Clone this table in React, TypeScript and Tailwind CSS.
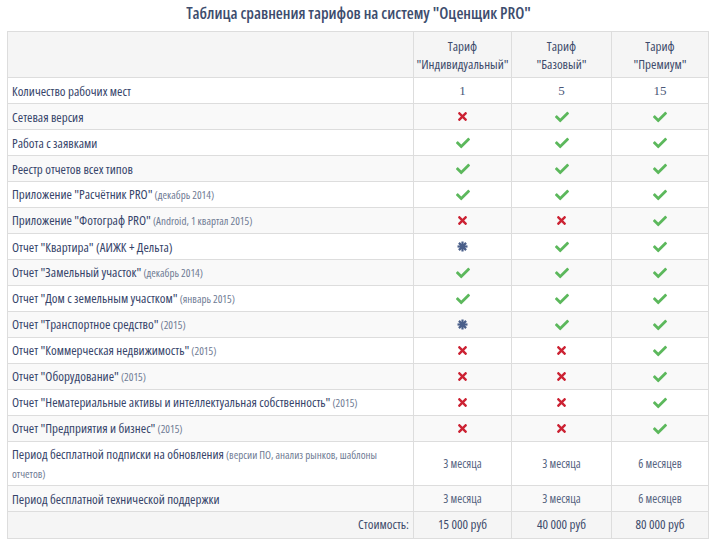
import React from "react";
import { FaCheck, FaTimes } from "react-icons/fa";

type Row = {
  label: string;
  note?: string;
  cells: string[];
  tall?: boolean;
};

const rows: Row[] = [
  { label: "Количество рабочих мест", cells: ["1", "5", "15"] },
  { label: "Сетевая версия", cells: ["no", "yes", "yes"] },
  { label: "Работа с заявками", cells: ["yes", "yes", "yes"] },
  { label: "Реестр отчетов всех типов", cells: ["yes", "yes", "yes"] },
  { label: 'Приложение "Расчётник PRO"', note: "(декабрь 2014)", cells: ["yes", "yes", "yes"] },
  { label: 'Приложение "Фотограф PRO"', note: "(Android, 1 квартал 2015)", cells: ["no", "no", "yes"] },
  { label: 'Отчет "Квартира" (АИЖК + Дельта)', cells: ["soon", "yes", "yes"] },
  { label: 'Отчет "Замельный участок"', note: "(декабрь 2014)", cells: ["yes", "yes", "yes"] },
  { label: 'Отчет "Дом с земельным участком"', note: "(январь 2015)", cells: ["yes", "yes", "yes"] },
  { label: 'Отчет "Транспортное средство"', note: "(2015)", cells: ["soon", "yes", "yes"] },
  { label: 'Отчет "Коммерческая недвижимость"', note: "(2015)", cells: ["no", "no", "yes"] },
  { label: 'Отчет "Оборудование"', note: "(2015)", cells: ["no", "no", "yes"] },
  { label: 'Отчет "Нематериальные активы и интеллектуальная собственность"', note: "(2015)", cells: ["no", "no", "yes"] },
  { label: 'Отчет "Предприятия и бизнес"', note: "(2015)", cells: ["no", "no", "yes"] },
  {
    label: "Период бесплатной подписки на обновления",
    note: "(версии ПО, анализ рынков, шаблоны отчетов)",
    cells: ["3 месяца", "3 месяца", "6 месяцев"],
    tall: true,
  },
  { label: "Период бесплатной технической поддержки", cells: ["3 месяца", "3 месяца", "6 месяцев"] },
];

const grid = "grid grid-cols-[405px_98px_100px_97px]";

// 8-spoke heavy asterisk, as in the "coming soon" cells
const Star = () => (
  <svg width="11" height="11" viewBox="0 0 11 11" className="text-[#4a5f8a]">
    <g stroke="currentColor" strokeWidth="2.2" strokeLinecap="butt">
      <line x1="5.5" y1="0.5" x2="5.5" y2="10.5" />
      <line x1="0.5" y1="5.5" x2="10.5" y2="5.5" />
      <line x1="1.9" y1="1.9" x2="9.1" y2="9.1" />
      <line x1="9.1" y1="1.9" x2="1.9" y2="9.1" />
    </g>
    <circle cx="5.5" cy="5.5" r="2.6" fill="currentColor" />
  </svg>
);

const Cell = ({ value }: { value: string }) => {
  if (value === "yes") return <FaCheck className="text-[#5cb85c] text-[14px]" />;
  if (value === "no") return <FaTimes className="text-[#cc2233] text-[13px]" />;
  if (value === "soon") return <Star />;
  if (/^\d+$/.test(value))
    return <span className="font-['Liberation_Serif',serif] text-[13px] text-[#4a5878]">{value}</span>;
  return <span className="text-[12px] text-[#56637f]">{value}</span>;
};

export default function App() {
  return (
    <div className="w-[715px] h-[539px] bg-white font-['Open_Sans',sans-serif] font-stretch-[75%] text-[#36446a] overflow-hidden">
      <h1 className="h-[31px] flex items-center justify-center pb-[6px] pl-[2px] text-[16px] font-semibold text-[#3d4d6e]">
        Таблица сравнения тарифов на систему "Оценщик PRO"
      </h1>
      <div className="ml-[7px] w-[702px] border border-[#dddddd]">
        <div className={`${grid} h-[46px] bg-[#f5f5f5] border-b border-[#dddddd] text-[13px] leading-[18px] text-[#3d4b6b]`}>
          <div />
          {['"Индивидуальный"', '"Базовый"', '"Премиум"'].map((t) => (
            <div key={t} className="border-l border-[#dddddd] flex flex-col items-center justify-center">
              <span>Тариф</span>
              <span>{t}</span>
            </div>
          ))}
        </div>
        {rows.map((r, i) => (
          <div
            key={r.label}
            className={`${grid} border-b border-[#dddddd] ${r.tall ? "h-[44px]" : "h-[26px]"} ${i % 2 === 1 ? "bg-[#f9f9f9]" : "bg-white"}`}
          >
            <div className="px-[4px] flex items-center text-[13px] leading-[18px]">
              <p>
                {r.label}
                {r.note && <span className="text-[11px] text-[#6f7b94]"> {r.note}</span>}
              </p>
            </div>
            {r.cells.map((c, j) => (
              <div key={j} className="border-l border-[#dddddd] flex items-center justify-center">
                <Cell value={c} />
              </div>
            ))}
          </div>
        ))}
        <div className={`${grid} h-[26px] bg-[#f5f5f5] text-[13px] font-medium text-[#3d4b6b]`}>
          <div className="px-[4px] flex items-center justify-end">Стоимость:</div>
          {["15 000 руб", "40 000 руб", "80 000 руб"].map((p) => (
            <div key={p} className="border-l border-[#dddddd] flex items-center justify-center">
              {p}
            </div>
          ))}
        </div>
      </div>
    </div>
  );
}
